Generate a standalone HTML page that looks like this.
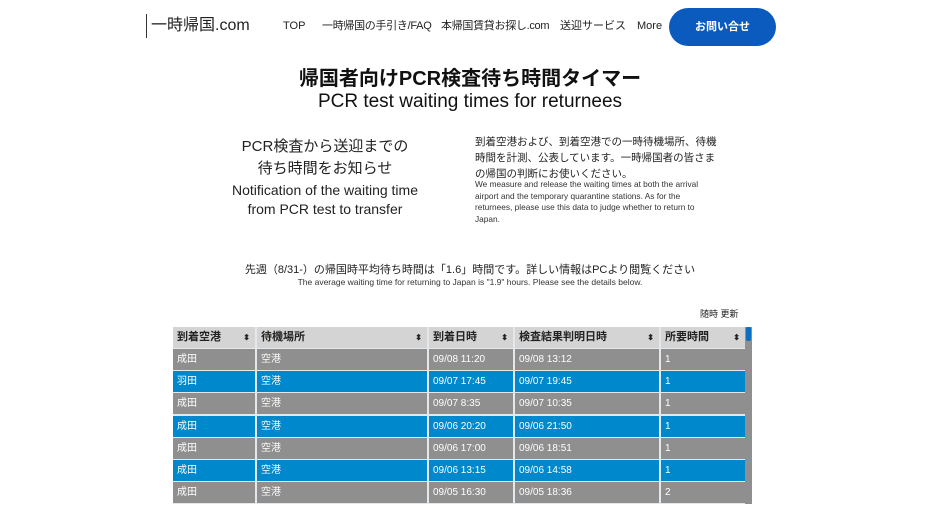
<!DOCTYPE html>
<html><head><meta charset="utf-8"><style>
*{margin:0;padding:0;box-sizing:border-box}
body{width:940px;height:517px;overflow:hidden;background:#fff;position:relative;font-family:"Liberation Sans","Noto Sans CJK JP",sans-serif;color:#222}
.a{position:absolute;white-space:nowrap}
.nav{font-size:11px;top:19px;line-height:14px;color:#222}
.c{text-align:center;left:0;width:940px}
.row{position:absolute;left:173px;height:22px;width:572px}
.row div{position:absolute;top:0;height:21px;line-height:21px;padding-left:4px;font-size:10px;color:#fff;overflow:hidden;white-space:nowrap}
.h div{background:#d4d4d4;color:#222;font-weight:bold;font-size:11px}
.h div span{position:absolute;right:5px;top:0;font-size:8px}
.b div{background:#0088cc}
.g div{background:#8f8f8f}
</style></head><body>
<div class="a" style="left:146px;top:14px;width:1px;height:24px;background:#333"></div>
<div class="a" style="left:151px;top:16px;font-size:16px;line-height:20px;color:#222">一時帰国.com</div>
<div class="a nav" style="left:283px">TOP</div>
<div class="a nav" style="left:322px;letter-spacing:-0.3px">一時帰国の手引き/FAQ</div>
<div class="a nav" style="left:441px;letter-spacing:-0.3px">本帰国賃貸お探し.com</div>
<div class="a nav" style="left:560px">送迎サービス</div>
<div class="a nav" style="left:637px">More</div>
<div class="a" style="left:669px;top:8px;width:107px;height:38px;border-radius:19px;background:#0a5bbd;color:#fff;font-size:11px;font-weight:bold;text-align:center;line-height:38px">お問い合せ</div>
<div class="a c" style="top:67px;font-size:20px;line-height:24px;font-weight:bold;color:#111">帰国者向けPCR検査待ち時間タイマー</div>
<div class="a c" style="top:91px;font-size:19px;line-height:22px;color:#111">PCR test waiting times for returnees</div>
<div class="a" style="left:205px;width:240px;top:136px;text-align:center;font-size:15px;line-height:22px;color:#222">PCR検査から送迎までの<br>待ち時間をお知らせ</div>
<div class="a" style="left:205px;width:240px;top:181px;text-align:center;font-size:14px;line-height:19px;color:#222">Notification of the waiting time<br>from PCR test to transfer</div>
<div class="a" style="left:475px;top:134px;font-size:10.5px;line-height:16px;color:#222">到着空港および、到着空港での一時待機場所、待機<br>時間を計測、公表しています。一時帰国者の皆さま<br>の帰国の判断にお使いください。</div>
<div class="a" style="left:475px;top:179px;font-size:8.3px;line-height:11.5px;color:#333">We measure and release the waiting times at both the arrival<br>airport and the temporary quarantine stations. As for the<br>returnees, please use this data to judge whether to return to<br>Japan.</div>
<div class="a c" style="top:263px;font-size:11px;line-height:14px;color:#222">先週（8/31-）の帰国時平均待ち時間は「1.6」時間です。詳しい情報はPCより閲覧ください</div>
<div class="a c" style="top:277px;font-size:8.5px;line-height:11px;color:#333">The average waiting time for returning to Japan is "1.9" hours.  Please see the details below.</div>
<div class="a" style="left:700px;top:309px;font-size:9px;line-height:11px;color:#222">随時 更新</div>

<div class="a" style="left:173px;top:327px;width:572px;height:177px;background:#e4e8ec"></div>
<div class="a" style="left:745px;top:327px;width:7px;height:177px;background:#8f8f8f"></div>

<div class="row h" style="top:327px"><div style="left:0;width:82px">到着空港<span>⬍</span></div><div style="left:84px;width:170px">待機場所<span>⬍</span></div><div style="left:256px;width:84px">到着日時<span>⬍</span></div><div style="left:342px;width:144px">検査結果判明日時<span>⬍</span></div><div style="left:488px;width:84px">所要時間<span>⬍</span></div></div>
<div class="row g" style="top:349px"><div style="left:0;width:82px">成田</div><div style="left:84px;width:170px">空港</div><div style="left:256px;width:84px">09/08 11:20</div><div style="left:342px;width:144px">09/08 13:12</div><div style="left:488px;width:84px">1</div></div>
<div class="row b" style="top:371px"><div style="left:0;width:82px">羽田</div><div style="left:84px;width:170px">空港</div><div style="left:256px;width:84px">09/07 17:45</div><div style="left:342px;width:144px">09/07 19:45</div><div style="left:488px;width:84px">1</div></div>
<div class="row g" style="top:393px"><div style="left:0;width:82px">成田</div><div style="left:84px;width:170px">空港</div><div style="left:256px;width:84px">09/07 8:35</div><div style="left:342px;width:144px">09/07 10:35</div><div style="left:488px;width:84px">1</div></div>
<div class="row b" style="top:416px"><div style="left:0;width:82px">成田</div><div style="left:84px;width:170px">空港</div><div style="left:256px;width:84px">09/06 20:20</div><div style="left:342px;width:144px">09/06 21:50</div><div style="left:488px;width:84px">1</div></div>
<div class="row g" style="top:438px"><div style="left:0;width:82px">成田</div><div style="left:84px;width:170px">空港</div><div style="left:256px;width:84px">09/06 17:00</div><div style="left:342px;width:144px">09/06 18:51</div><div style="left:488px;width:84px">1</div></div>
<div class="row b" style="top:460px"><div style="left:0;width:82px">成田</div><div style="left:84px;width:170px">空港</div><div style="left:256px;width:84px">09/06 13:15</div><div style="left:342px;width:144px">09/06 14:58</div><div style="left:488px;width:84px">1</div></div>
<div class="row g" style="top:482px"><div style="left:0;width:82px">成田</div><div style="left:84px;width:170px">空港</div><div style="left:256px;width:84px">09/05 16:30</div><div style="left:342px;width:144px">09/05 18:36</div><div style="left:488px;width:84px">2</div></div>

<div class="a" style="left:746px;top:327px;width:5px;height:14px;background:#0a6fc2;border-radius:2px"></div>
</body></html>
